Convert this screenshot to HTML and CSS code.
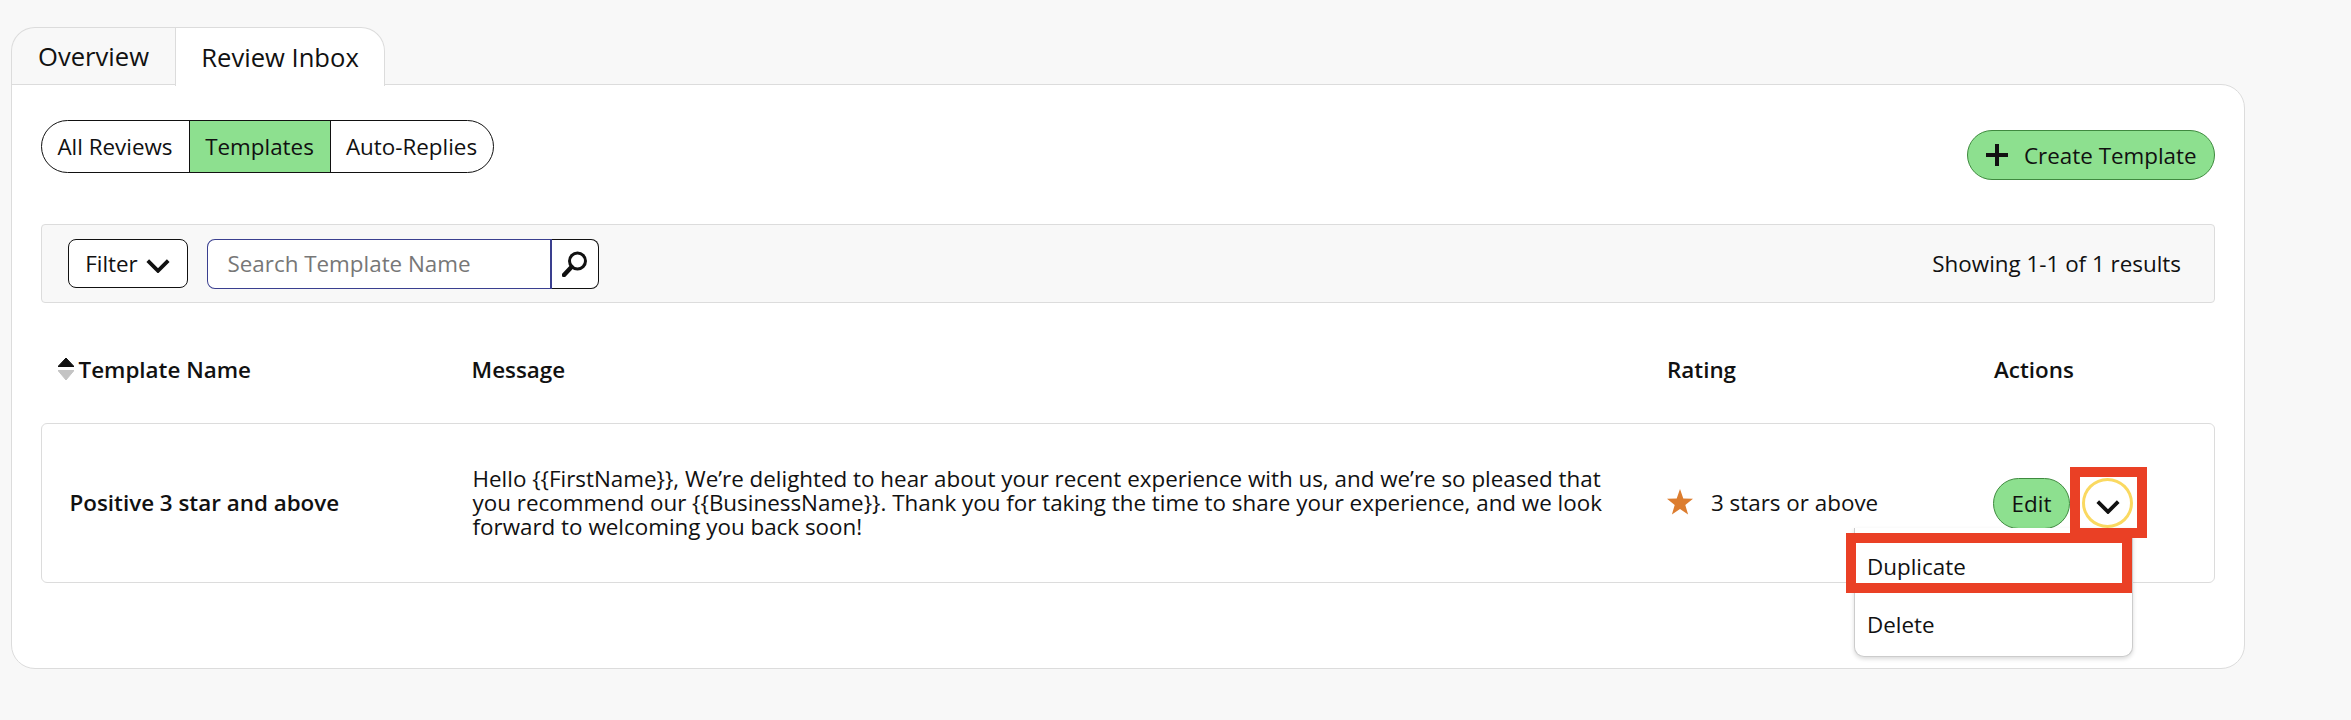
FILE: index.html
```html
<!DOCTYPE html>
<html lang="en">
<head>
<meta charset="utf-8">
<title>Review Inbox</title>
<link rel="stylesheet" href="styles.css">
</head>
<body>
<main class="page">
  <nav class="tabs">
    <div class="tab tab-off">Overview</div>
    <div class="tab tab-on">Review Inbox</div>
  </nav>
  <section class="panel">
    <div class="top">
      <div class="segments">
        <div class="seg seg-a">All Reviews</div>
        <div class="seg seg-b">Templates</div>
        <div class="seg seg-c">Auto-Replies</div>
      </div>
      <button class="create">
        <svg class="plus" viewBox="0 0 24 24"><path d="M12 1v22M1 12h22"/></svg>
        <span>Create Template</span>
      </button>
    </div>
    <div class="toolbar">
      <button class="filter">Filter
        <svg class="chev" viewBox="0 0 22 13"><path d="M1.5 1.5 11 11l9.500-9.500"/></svg>
      </button>
      <div class="search">
        <div class="search-input">Search Template Name</div>
        <div class="search-btn">
          <svg class="mag" viewBox="0 0 26 26"><circle cx="15.500" cy="10" r="8"/><path d="M9.500 16 2 24"/></svg>
        </div>
      </div>
      <div class="count">Showing 1-1 of 1 results</div>
    </div>
    <div class="thead">
      <div class="th th-name">
        <svg class="sort" viewBox="0 0 16 22"><path class="sort-up" d="M8 0 16 8.500H0z"/><path class="sort-down" d="M0 12.500h16L8 22z"/></svg>
        <span>Template Name</span>
      </div>
      <div class="th">Message</div>
      <div class="th">Rating</div>
      <div class="th">Actions</div>
    </div>
    <div class="row">
      <div class="name">Positive 3 star and above</div>
      <div class="msg">Hello {{FirstName}}, We’re delighted to hear about your recent experience with us, and we’re so pleased that you recommend our {{BusinessName}}. Thank you for taking the time to share your experience, and we look forward to welcoming you back soon!</div>
      <div class="rating">
        <svg class="star" viewBox="0 0 26 26"><path d="M13 0l3.300 9.600 9.700.2-7.700 6.100 2.800 9.700L13 20l-8.100 5.600 2.800-9.700L0 9.800l9.700-.2z"/></svg>
        <span>3 stars or above</span>
      </div>
      <div class="actions">
        <button class="edit">Edit</button>
        <button class="more">
          <svg class="chev chev-more" viewBox="0 0 22 13"><path d="M1.500 1.500 11 11l9.500-9.500"/></svg>
        </button>
        <div class="menu">
          <div class="item item-first">Duplicate</div>
          <div class="item item-second">Delete</div>
        </div>
        <div class="mark mark-more"></div>
        <div class="mark mark-dup"></div>
      </div>
    </div>
  </section>
</main>
</body>
</html>
```
FILE: styles.css
```css
* { box-sizing: border-box; }
html, body { margin: 0; background: #f8f8f8; }
body { font-family: "Open Sans", "Noto Sans", sans-serif; color: #111; font-size: 22.400px; height: 720px; overflow: hidden; }
button { font: inherit; color: inherit; padding: 0; cursor: pointer; }
.page { padding: 27px 0 0 11px; width: 2245px; }

.tabs { display: flex; height: 58px; }
.tab { display: flex; align-items: center; justify-content: center; font-size: 25.600px; border: 1.500px solid #dcdcdc; }
.tab-off { width: 164px; background: #f8f8f8; border-right: 0; border-top-left-radius: 24px; }
.tab-on { width: 210px; background: #fff; border-bottom: 0; border-top-right-radius: 24px; position: relative; z-index: 1; height: 59px; }

.panel { height: 585px; margin-top: -1px; background: #fff; border: 1.500px solid #dcdcdc; border-radius: 0 24px 24px 24px; padding: 35px 29px 0 28.500px; }

.top { display: flex; justify-content: space-between; align-items: flex-start; height: 105px; }
.segments { display: flex; height: 53px; border: 1.500px solid #111; border-radius: 27px; overflow: hidden; width: 453px; }
.seg { display: flex; align-items: center; justify-content: center; }
.seg-a { width: 147px; }
.seg-b { width: 142px; background: #8de08f; border-left: 1.500px solid #111; border-right: 1.500px solid #111; }
.seg-c { flex: 1; }

.create { display: flex; align-items: center; width: 248px; height: 50px; margin-top: 10px; background: #8de08f; border: 1.500px solid #3f8a3f; border-radius: 25px; padding-left: 17px; gap: 15px; white-space: nowrap; }
.plus { width: 24px; height: 24px; fill: none; stroke: #111; stroke-width: 4; }

.toolbar { display: flex; align-items: center; height: 79px; background: #f8f8f8; border: 1.500px solid #dcdcdc; border-radius: 4px; padding: 0 33px 0 26px; margin-top: -1px; }
.filter { display: flex; align-items: center; justify-content: center; gap: 8px; width: 120px; height: 49px; background: #fff; border: 1.500px solid #111; border-radius: 8px; }
.chev { width: 24px; height: 14px; fill: none; stroke: #111; stroke-width: 3.500; }
.filter .chev { margin-top: 5px; }
.search { display: flex; height: 50px; margin-left: 19px; }
.search-input { width: 345px; display: flex; align-items: center; padding-left: 20px; color: #777; background: #fff; border: 1.500px solid #3a3f8f; border-right-width: 2px; border-radius: 8px 0 0 8px; }
.search-btn { width: 47px; display: flex; align-items: center; justify-content: center; background: #fff; border: 1.500px solid #111; border-left: 0; border-radius: 0 8px 8px 0; }
.mag { width: 26px; height: 26px; fill: none; stroke: #111; }
.mag circle { stroke-width: 3; }
.mag path { stroke-width: 4.500; stroke-linecap: round; }
.count { margin-left: auto; }

.thead { display: grid; grid-template-columns: 431px 1195.500px 327px 1fr; height: 120px; padding-top: 12px; align-items: center; font-weight: 600; }
.th-name { display: flex; align-items: center; gap: 5px; padding-left: 17px; }
.sort { width: 16px; height: 22px; }
.sort-up { fill: #111; stroke: #111; stroke-width: 1; stroke-linejoin: round; }
.sort-down { fill: #c4c4c4; stroke: #c4c4c4; stroke-width: 1; stroke-linejoin: round; }

.row { display: grid; grid-template-columns: 431px 1195.500px 327px 1fr; height: 160px; align-items: center; border: 1.500px solid #dcdcdc; border-radius: 6px; }
.name { font-weight: 600; padding-left: 28px; margin-top: -2px; }
.msg { line-height: 24px; width: 1140px; margin-top: -1px; }
.rating { display: flex; align-items: center; gap: 18px; margin-top: -2px; }
.star { width: 26px; height: 26px; fill: #dc7d2f; margin-left: -1px; }

.actions { position: relative; display: flex; align-items: center; gap: 12px; }
.edit { width: 77px; height: 51px; margin-left: -2px; background: #8de08f; border: 1.500px solid #3f8a3f; border-radius: 26px; }
.more { display: flex; align-items: center; justify-content: center; width: 51px; height: 50px; background: #fff; border: 3px solid #fad961; border-radius: 50%; }
.chev-more { margin-top: 7px; }

.menu { position: absolute; left: -141px; top: 50px; width: 279px; height: 129px; background: #fff; border: 1.500px solid #ccc; border-top: 0; border-radius: 0 0 10px 10px; box-shadow: 0 2px 4px rgba(0,0,0,.15); }
.item { position: absolute; left: 12px; line-height: 30px; }
.item-first { top: 24px; }
.item-second { top: 82px; }

.mark { position: absolute; border: 10px solid #ea4025; }
.mark-more { left: 75px; top: -11px; width: 77px; height: 71px; }
.mark-dup { left: -149px; top: 55px; width: 286px; height: 60px; }
```
